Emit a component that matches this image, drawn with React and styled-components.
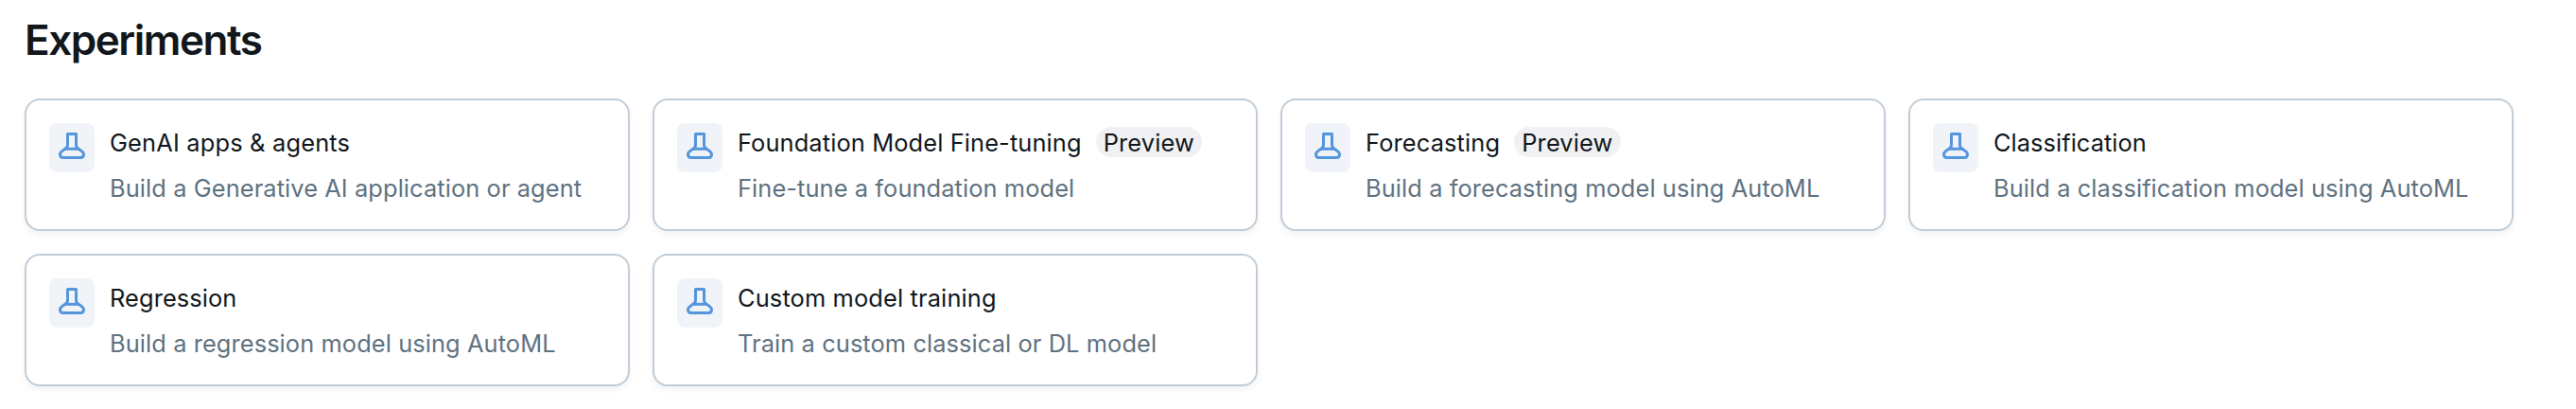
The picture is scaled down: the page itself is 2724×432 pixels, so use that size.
import React from 'react';
import styled, { createGlobalStyle } from 'styled-components';

const GlobalStyle = createGlobalStyle`
  * { box-sizing: border-box; }
  body {
    margin: 0;
    background: #fff;
    color: #11171c;
    font-family: Inter, "Liberation Sans", sans-serif;
  }
`;

const Section = styled.section`
  padding: 12px 66px 24px 26px;
`;

const Heading = styled.h1`
  margin: 0 0 32px;
  font-size: 44px;
  line-height: 60px;
  font-weight: 600;
  letter-spacing: -1.45px;
`;

const CardGrid = styled.div`
  display: grid;
  grid-template-columns: repeat(4, 640px);
  grid-auto-rows: 140px;
  gap: 24px;
`;

const Card = styled.article`
  display: flex;
  align-items: flex-start;
  gap: 16px;
  padding: 24px;
  background: #fff;
  border: 2px solid #c0cdd8;
  border-radius: 16px;
  box-shadow: 0 4px 6px rgba(0, 0, 0, 0.05);
`;

const IconTile = styled.div`
  flex: none;
  width: 48px;
  height: 52px;
  padding: 8px;
  border-radius: 8px;
  background: #f0f3f8;
  color: #5595dc;

  svg { display: block; }
`;

const CardText = styled.div`
  display: flex;
  flex-direction: column;
  gap: 8px;
  white-space: nowrap;
  font-size: 25.4px;
  line-height: 40px;
`;

const TitleRow = styled.div`
  display: flex;
  align-items: center;
  gap: 15px;
  height: 40px;
`;

const Title = styled.span`
  padding-top: 2px;
  letter-spacing: ${(p) => p.$tracking}px;
`;

const Tag = styled.span`
  height: 32px;
  padding: 1px 8px 0;
  border-radius: 16px;
  background: #f1f1f3;
  line-height: 32px;
  letter-spacing: 0.15px;
`;

const Description = styled.span`
  padding-top: 1px;
  color: #5f7281;
  letter-spacing: 0.09px;
`;

const Beaker = () => (
  <svg width="32" height="32" viewBox="0 0 32 32" fill="none" stroke="currentColor" strokeWidth="3" strokeLinejoin="round">
    <path d="M11.5 3.5h9V15.3q0 2 1.6 3.2l4.6 3.4q1.8 1.3 1.8 3.3 0 3.3-3.3 3.3H6.8q-3.3 0-3.3-3.3 0-2 1.8-3.3l4.6-3.4q1.6-1.2 1.6-3.2z" />
    <path d="M9 19.3h14" />
  </svg>
);

const experiments = [
  { title: 'GenAI apps & agents', tracking: 0.18, description: 'Build a Generative AI application or agent' },
  { title: 'Foundation Model Fine-tuning', tracking: 0.12, description: 'Fine-tune a foundation model', tag: 'Preview' },
  { title: 'Forecasting', tracking: 0.15, description: 'Build a forecasting model using AutoML', tag: 'Preview' },
  { title: 'Classification', tracking: 0.05, description: 'Build a classification model using AutoML' },
  { title: 'Regression', tracking: 0.1, description: 'Build a regression model using AutoML' },
  { title: 'Custom model training', tracking: 0.14, description: 'Train a custom classical or DL model' },
];

export default function App() {
  return (
    <Section>
      <GlobalStyle />
      <Heading>Experiments</Heading>
      <CardGrid>
        {experiments.map((item) => (
          <Card key={item.title}>
            <IconTile><Beaker /></IconTile>
            <CardText>
              <TitleRow>
                <Title $tracking={item.tracking}>{item.title}</Title>
                {item.tag && <Tag>{item.tag}</Tag>}
              </TitleRow>
              <Description>{item.description}</Description>
            </CardText>
          </Card>
        ))}
      </CardGrid>
    </Section>
  );
}
